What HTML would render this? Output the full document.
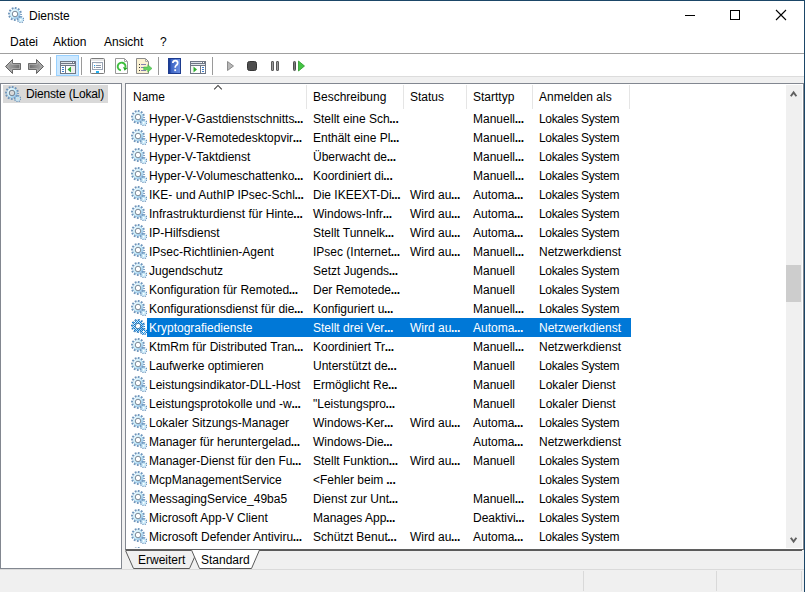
<!DOCTYPE html>
<html><head><meta charset="utf-8"><style>
*{box-sizing:border-box}
html,body{margin:0;padding:0;width:805px;height:592px;overflow:hidden;background:#f0f0f0;font-family:"Liberation Sans",sans-serif;font-size:12px;color:#000}
.a{position:absolute}
.t{position:absolute;white-space:nowrap;line-height:14px}
.sep{position:absolute;width:1px;top:57px;height:18px;background:#9a9a9a}
.hs{position:absolute;top:85px;width:1px;height:24px;background:#e5e5e5}
.w{color:#fff}
i{font-style:normal;font-weight:bold;letter-spacing:-0.3px;margin-left:-0.4px}
</style></head><body>
<svg width="0" height="0" style="position:absolute">
 <defs>
  <linearGradient id="ring" x1="0" y1="0" x2="1" y2="1">
   <stop offset="0" stop-color="#eefaff"/>
   <stop offset="0.55" stop-color="#c4ecfb"/>
   <stop offset="1" stop-color="#8fbde6"/>
  </linearGradient>
  <g id="gear">
   <circle cx="7" cy="7" r="6.0" fill="none" stroke="#6d94ba" stroke-width="1.9" stroke-dasharray="1.75 1.392" stroke-dashoffset="0.875"/>
   <circle cx="7" cy="7" r="4.95" fill="none" stroke="#7aa4ca" stroke-width="0.8"/>
   <circle cx="7" cy="7" r="3.95" fill="none" stroke="url(#ring)" stroke-width="1.9"/>
   <circle cx="7" cy="7" r="2.75" fill="none" stroke="#5a6b7c" stroke-width="0.8"/>
   <circle cx="12.7" cy="12.7" r="2.9" fill="none" stroke="#6e97bf" stroke-width="1.6" stroke-dasharray="1.2 1.077"/>
   <circle cx="12.7" cy="12.7" r="1.6" fill="none" stroke="#c0e6f8" stroke-width="1.3"/>
  </g>
  <pattern id="chk" width="2" height="2" patternUnits="userSpaceOnUse">
   <rect x="0" y="0" width="1" height="1" fill="#0078d7"/>
   <rect x="1" y="1" width="1" height="1" fill="#0078d7"/>
  </pattern>
  <mask id="gmask" style="mask-type:alpha" maskUnits="userSpaceOnUse" x="0" y="0" width="16" height="16">
   <use href="#gear"/>
  </mask>
  <linearGradient id="arrowg" x1="0" y1="0" x2="0" y2="1">
   <stop offset="0" stop-color="#b9b9b9"/>
   <stop offset="0.5" stop-color="#8a8a8a"/>
   <stop offset="1" stop-color="#a0a0a0"/>
  </linearGradient>
  <linearGradient id="arrowh" x1="0" y1="0" x2="1" y2="0">
   <stop offset="0" stop-color="#a8a8a8"/>
   <stop offset="1" stop-color="#6e6e6e"/>
  </linearGradient>
  <linearGradient id="arrowh2" x1="0" y1="0" x2="1" y2="0">
   <stop offset="0" stop-color="#6e6e6e"/>
   <stop offset="1" stop-color="#a8a8a8"/>
  </linearGradient>
  <linearGradient id="helpg" x1="0" y1="0" x2="1" y2="0">
   <stop offset="0" stop-color="#2d55b8"/>
   <stop offset="1" stop-color="#6f93e6"/>
  </linearGradient>
 </defs>
</svg>
<div class="a" style="left:0;top:0;width:805px;height:53px;background:#fff"></div>
<div class="a" style="left:0;top:0;width:805px;height:1px;background:#1b4667"></div>
<svg class="a" style="left:8px;top:7px" width="16" height="16" viewBox="0 0 16 16"><use href="#gear"/></svg>
<div class="t" style="left:29px;top:9px">Dienste</div>
<svg class="a" style="left:680px;top:5px" width="120" height="20">
 <rect x="5" y="10" width="10" height="1" fill="#000"/>
 <rect x="50.5" y="5.5" width="9" height="9" fill="none" stroke="#000" stroke-width="1"/>
 <path d="M96 5 L106 15 M106 5 L96 15" stroke="#000" stroke-width="1.1"/>
</svg>
<div class="t" style="left:10px;top:35px">Datei</div>
<div class="t" style="left:53px;top:35px">Aktion</div>
<div class="t" style="left:104px;top:35px">Ansicht</div>
<div class="t" style="left:160px;top:35px">?</div>
<div class="a" style="left:0;top:53px;width:804px;height:1px;background:#a0a0a0"></div>
<div class="a" style="left:0;top:54px;width:804px;height:22px;background:#fff"></div>
<div class="a" style="left:0;top:76px;width:804px;height:1px;background:#dcdcdc"></div>
<div class="sep" style="left:50px"></div>
<div class="sep" style="left:81px"></div>
<div class="sep" style="left:158px"></div>
<div class="sep" style="left:212px"></div>
<svg class="a" style="left:0;top:54px" width="320" height="22">
 <path d="M5.5 12.5 L12.5 5.5 L12.5 9.5 L20.5 9.5 L20.5 15.5 L12.5 15.5 L12.5 19.5 Z" fill="url(#arrowg)" stroke="#626262" stroke-width="1" stroke-linejoin="round"/>
 <path d="M7 12.5 L11.7 7.6 L11.7 10.3 L19.7 10.3 L19.7 14.7 L11.7 14.7 L11.7 17.4 Z" fill="url(#arrowh)" stroke="#c4c4c4" stroke-width="0.6" stroke-linejoin="round"/>
 <path d="M43.5 12.5 L36.5 5.5 L36.5 9.5 L28.5 9.5 L28.5 15.5 L36.5 15.5 L36.5 19.5 Z" fill="url(#arrowg)" stroke="#626262" stroke-width="1" stroke-linejoin="round"/>
 <path d="M42 12.5 L37.3 7.6 L37.3 10.3 L29.3 10.3 L29.3 14.7 L37.3 14.7 L37.3 17.4 Z" fill="url(#arrowh2)" stroke="#c4c4c4" stroke-width="0.6" stroke-linejoin="round"/>
 <rect x="56.5" y="1.5" width="22" height="20" fill="#cce8ff" stroke="#99d1ff"/>
 <g transform="translate(60,7)">
  <rect x="0.5" y="0.5" width="15" height="12" fill="#fff" stroke="#6f7785"/>
  <rect x="1" y="1" width="10" height="1" fill="#dfe3ea"/>
  <rect x="12" y="1" width="1" height="1" fill="#6f7785"/><rect x="14" y="1" width="1" height="1" fill="#6f7785"/>
  <rect x="1" y="2" width="14" height="1" fill="#6f7785"/>
  <rect x="1" y="3" width="14" height="1" fill="#e4e7ec"/>
  <rect x="1" y="4" width="14" height="1" fill="#6f7785"/>
  <rect x="5" y="5" width="1" height="7" fill="#6f7785"/>
  <rect x="11" y="5" width="4" height="7" fill="#eeeeee"/>
  <rect x="2" y="6" width="2" height="1" fill="#3f7fd0"/>
  <rect x="2" y="8" width="2" height="1" fill="#3f7fd0"/>
  <rect x="2" y="10" width="2" height="1" fill="#3f7fd0"/>
  <path d="M7.5 8.5 L11 5.5 L11 11.5 Z" fill="#2fae2f"/>
 </g>
 <g transform="translate(90,4)">
  <rect x="0.5" y="0.5" width="14" height="15" rx="1" fill="#fff" stroke="#7a7a7a"/>
  <rect x="1" y="1" width="13" height="2" fill="#e8e8e8"/>
  <rect x="2.5" y="4.5" width="10" height="7" fill="#fff" stroke="#9aa4b4"/>
  <rect x="6" y="4" width="5" height="1.2" fill="#9aa4b4"/>
  <rect x="4" y="7" width="1.2" height="1.2" fill="#1ea0f0"/>
  <rect x="6" y="7" width="5" height="1" fill="#8a96a8"/>
  <rect x="4" y="9" width="1.2" height="1" fill="#888"/>
  <rect x="6" y="9" width="5" height="1" fill="#8a96a8"/>
  <rect x="6" y="13" width="3" height="2" fill="#23b0f0"/>
 </g>
 <g transform="translate(115,4)">
  <path d="M0.5 0.5 L9.5 0.5 L12.5 3.5 L12.5 15.5 L0.5 15.5 Z" fill="#fff" stroke="#999"/>
  <path d="M9.5 0.5 L9.5 3.5 L12.5 3.5" fill="none" stroke="#aaa"/>
  <path d="M5.92 12.34 A3.9 3.9 0 1 1 10.37 9.51" fill="none" stroke="#3dbe3d" stroke-width="1.9"/>
  <path d="M8.1 8.9 L12.6 10.1 L9.6 12.8 Z" fill="#22a822"/>
 </g>
 <g transform="translate(136,4)">
  <path d="M0.5 0.5 L9.5 0.5 L12.5 3.5 L12.5 15.5 L0.5 15.5 Z" fill="#fbf2d3" stroke="#8a8a8a"/>
  <path d="M9.5 0.5 L9.5 3.5 L12.5 3.5" fill="none" stroke="#aaa"/>
  <rect x="3" y="6" width="1" height="1" fill="#333"/>
  <rect x="3" y="9" width="1" height="1" fill="#333"/>
  <rect x="3" y="12" width="1" height="1" fill="#333"/>
  <rect x="5" y="6" width="5" height="1" fill="#8480b0"/>
  <rect x="5" y="9" width="5" height="1" fill="#8480b0"/>
  <rect x="5" y="12" width="5" height="1" fill="#8480b0"/>
  <path d="M7.7 9 L11.8 9 L11.8 6.7 L16 10.4 L11.8 14.1 L11.8 11.8 L7.7 11.8 Z" fill="#62d262" stroke="#3aaa3a" stroke-width="0.5"/>
 </g>
 <g transform="translate(168,4)">
  <rect x="0" y="0" width="13" height="16" fill="url(#helpg)"/>
  <rect x="0" y="0" width="2.5" height="16" fill="#1c3f9c"/>
  <rect x="0.5" y="0.5" width="12" height="15" fill="none" stroke="#1d3b8e"/>
  <path d="M4.8 5 Q5 2.6 7.3 2.6 Q9.7 2.6 9.7 5 Q9.7 6.6 8 7.6 Q7.2 8.2 7.2 9.8" fill="none" stroke="#fff" stroke-width="1.7"/>
  <rect x="6.3" y="11.3" width="1.8" height="1.8" fill="#fff"/>
 </g>
 <g transform="translate(190,7)">
  <rect x="0.5" y="0.5" width="15" height="12" fill="#fff" stroke="#6f7785"/>
  <rect x="1" y="1" width="10" height="1" fill="#dfe3ea"/>
  <rect x="12" y="1" width="1" height="1" fill="#6f7785"/><rect x="14" y="1" width="1" height="1" fill="#6f7785"/>
  <rect x="1" y="2" width="14" height="1" fill="#6f7785"/>
  <rect x="1" y="3" width="14" height="1" fill="#e4e7ec"/>
  <rect x="1" y="4" width="14" height="1" fill="#6f7785"/>
  <rect x="10" y="5" width="1" height="7" fill="#6f7785"/>
  <rect x="1" y="5" width="2" height="7" fill="#f4f4f4"/>
  <rect x="12" y="6" width="2" height="1" fill="#3f7fd0"/>
  <rect x="12" y="8" width="2" height="1" fill="#3f7fd0"/>
  <rect x="12" y="10" width="2" height="1" fill="#3f7fd0"/>
  <path d="M3.5 5.5 L7 8.5 L3.5 11.5 Z" fill="#2fae2f"/>
 </g>
 <path d="M227.5 7.5 L233.5 12 L227.5 16.5 Z" fill="#b8b8b8" stroke="#8c8c8c"/>
 <rect x="247.5" y="7.5" width="9" height="9" rx="2" fill="#4e4e4e" stroke="#363636"/>
 <rect x="271.5" y="7.5" width="2" height="9" rx="0.4" fill="#9a9a9a" stroke="#5a5a5a"/>
 <rect x="276.5" y="7.5" width="2" height="9" rx="0.4" fill="#9a9a9a" stroke="#5a5a5a"/>
 <rect x="293.5" y="7.5" width="2" height="9" rx="0.8" fill="#7a7a7a" stroke="#4e4e4e"/>
 <path d="M298.5 7 L304.5 12 L298.5 17 Z" fill="#44c444" stroke="#2a9a2a" stroke-width="0.8"/>
</svg>
<div class="a" style="left:0;top:83px;width:122px;height:486px;background:#fff;border:1px solid #828790"></div>
<div class="a" style="left:3px;top:85px;width:105px;height:18px;background:#d9d9d9"></div>
<svg class="a" style="left:5px;top:86px" width="16" height="16" viewBox="0 0 16 16"><use href="#gear"/></svg>
<div class="t" style="left:26px;top:87px;letter-spacing:-0.17px">Dienste (Lokal)</div>
<div class="a" style="left:125px;top:83px;width:679px;height:467px;background:#fff;border:1px solid #828790;border-bottom-color:#5f5f5f"></div>
<div class="t" style="left:133px;top:90px">Name</div>
<svg class="a" style="left:213px;top:84px" width="10" height="7"><path d="M1.2 5.3 L5 1.5 L8.8 5.3" stroke="#3c3c3c" stroke-width="1.05" fill="none"/></svg>
<div class="hs" style="left:306px"></div>
<div class="hs" style="left:403px"></div>
<div class="hs" style="left:466px"></div>
<div class="hs" style="left:532px"></div>
<div class="hs" style="left:629px"></div>
<div class="t" style="left:313px;top:90px">Beschreibung</div>
<div class="t" style="left:410px;top:90px">Status</div>
<div class="t" style="left:473px;top:90px">Starttyp</div>
<div class="t" style="left:539px;top:90px">Anmelden als</div>
<div class="a" style="left:126px;top:109px;width:659px;height:439px;overflow:hidden">
<svg class="a" style="left:5px;top:1px" width="16" height="16" viewBox="0 0 16 16"><use href="#gear"/></svg>
<div class="t" style="left:23px;top:3px">Hyper-V-Gastdienstschnitts<i>...</i></div>
<div class="t" style="left:187px;top:3px">Stellt eine Sch<i>...</i></div>
<div class="t" style="left:347px;top:3px">Manuell<i>...</i></div>
<div class="t" style="left:413px;top:3px"><span style="letter-spacing:-0.33px">Lokales System</span></div>
<svg class="a" style="left:5px;top:20px" width="16" height="16" viewBox="0 0 16 16"><use href="#gear"/></svg>
<div class="t" style="left:23px;top:22px">Hyper-V-Remotedesktopvir<i>...</i></div>
<div class="t" style="left:187px;top:22px">Enthält eine Pl<i>...</i></div>
<div class="t" style="left:347px;top:22px">Manuell<i>...</i></div>
<div class="t" style="left:413px;top:22px"><span style="letter-spacing:-0.33px">Lokales System</span></div>
<svg class="a" style="left:5px;top:39px" width="16" height="16" viewBox="0 0 16 16"><use href="#gear"/></svg>
<div class="t" style="left:23px;top:41px">Hyper-V-Taktdienst</div>
<div class="t" style="left:187px;top:41px">Überwacht de<i>...</i></div>
<div class="t" style="left:347px;top:41px">Manuell<i>...</i></div>
<div class="t" style="left:413px;top:41px"><span style="letter-spacing:-0.33px">Lokales System</span></div>
<svg class="a" style="left:5px;top:58px" width="16" height="16" viewBox="0 0 16 16"><use href="#gear"/></svg>
<div class="t" style="left:23px;top:60px">Hyper-V-Volumeschattenko<i>...</i></div>
<div class="t" style="left:187px;top:60px">Koordiniert di<i>...</i></div>
<div class="t" style="left:347px;top:60px">Manuell<i>...</i></div>
<div class="t" style="left:413px;top:60px"><span style="letter-spacing:-0.33px">Lokales System</span></div>
<svg class="a" style="left:5px;top:77px" width="16" height="16" viewBox="0 0 16 16"><use href="#gear"/></svg>
<div class="t" style="left:23px;top:79px">IKE- und AuthIP IPsec-Schl<i>...</i></div>
<div class="t" style="left:187px;top:79px">Die IKEEXT-Di<i>...</i></div>
<div class="t" style="left:284px;top:79px">Wird au<i>...</i></div>
<div class="t" style="left:347px;top:79px">Automa<i>...</i></div>
<div class="t" style="left:413px;top:79px"><span style="letter-spacing:-0.33px">Lokales System</span></div>
<svg class="a" style="left:5px;top:96px" width="16" height="16" viewBox="0 0 16 16"><use href="#gear"/></svg>
<div class="t" style="left:23px;top:98px">Infrastrukturdienst für Hinte<i>...</i></div>
<div class="t" style="left:187px;top:98px">Windows-Infr<i>...</i></div>
<div class="t" style="left:284px;top:98px">Wird au<i>...</i></div>
<div class="t" style="left:347px;top:98px">Automa<i>...</i></div>
<div class="t" style="left:413px;top:98px"><span style="letter-spacing:-0.33px">Lokales System</span></div>
<svg class="a" style="left:5px;top:115px" width="16" height="16" viewBox="0 0 16 16"><use href="#gear"/></svg>
<div class="t" style="left:23px;top:117px">IP-Hilfsdienst</div>
<div class="t" style="left:187px;top:117px">Stellt Tunnelk<i>...</i></div>
<div class="t" style="left:284px;top:117px">Wird au<i>...</i></div>
<div class="t" style="left:347px;top:117px">Automa<i>...</i></div>
<div class="t" style="left:413px;top:117px"><span style="letter-spacing:-0.33px">Lokales System</span></div>
<svg class="a" style="left:5px;top:134px" width="16" height="16" viewBox="0 0 16 16"><use href="#gear"/></svg>
<div class="t" style="left:23px;top:136px">IPsec-Richtlinien-Agent</div>
<div class="t" style="left:187px;top:136px">IPsec (Internet<i>...</i></div>
<div class="t" style="left:284px;top:136px">Wird au<i>...</i></div>
<div class="t" style="left:347px;top:136px">Manuell<i>...</i></div>
<div class="t" style="left:413px;top:136px">Netzwerkdienst</div>
<svg class="a" style="left:5px;top:153px" width="16" height="16" viewBox="0 0 16 16"><use href="#gear"/></svg>
<div class="t" style="left:23px;top:155px">Jugendschutz</div>
<div class="t" style="left:187px;top:155px">Setzt Jugends<i>...</i></div>
<div class="t" style="left:347px;top:155px">Manuell</div>
<div class="t" style="left:413px;top:155px"><span style="letter-spacing:-0.33px">Lokales System</span></div>
<svg class="a" style="left:5px;top:172px" width="16" height="16" viewBox="0 0 16 16"><use href="#gear"/></svg>
<div class="t" style="left:23px;top:174px">Konfiguration für Remoted<i>...</i></div>
<div class="t" style="left:187px;top:174px">Der Remotede<i>...</i></div>
<div class="t" style="left:347px;top:174px">Manuell</div>
<div class="t" style="left:413px;top:174px"><span style="letter-spacing:-0.33px">Lokales System</span></div>
<svg class="a" style="left:5px;top:191px" width="16" height="16" viewBox="0 0 16 16"><use href="#gear"/></svg>
<div class="t" style="left:23px;top:193px">Konfigurationsdienst für die<i>...</i></div>
<div class="t" style="left:187px;top:193px">Konfiguriert u<i>...</i></div>
<div class="t" style="left:347px;top:193px">Manuell<i>...</i></div>
<div class="t" style="left:413px;top:193px"><span style="letter-spacing:-0.33px">Lokales System</span></div>
<div class="a" style="left:21px;top:209px;width:484px;height:19px;background:#0078d7"></div>
<svg class="a" style="left:5px;top:210px" width="16" height="16" viewBox="0 0 16 16"><use href="#gear"/><rect width="16" height="16" fill="url(#chk)" mask="url(#gmask)"/></svg>
<div class="t w" style="left:23px;top:212px">Kryptografiedienste</div>
<div class="t w" style="left:187px;top:212px">Stellt drei Ver<i>...</i></div>
<div class="t w" style="left:284px;top:212px">Wird au<i>...</i></div>
<div class="t w" style="left:347px;top:212px">Automa<i>...</i></div>
<div class="t w" style="left:413px;top:212px">Netzwerkdienst</div>
<svg class="a" style="left:5px;top:229px" width="16" height="16" viewBox="0 0 16 16"><use href="#gear"/></svg>
<div class="t" style="left:23px;top:231px">KtmRm für Distributed Tran<i>...</i></div>
<div class="t" style="left:187px;top:231px">Koordiniert Tr<i>...</i></div>
<div class="t" style="left:347px;top:231px">Manuell<i>...</i></div>
<div class="t" style="left:413px;top:231px">Netzwerkdienst</div>
<svg class="a" style="left:5px;top:248px" width="16" height="16" viewBox="0 0 16 16"><use href="#gear"/></svg>
<div class="t" style="left:23px;top:250px">Laufwerke optimieren</div>
<div class="t" style="left:187px;top:250px">Unterstützt de<i>...</i></div>
<div class="t" style="left:347px;top:250px">Manuell</div>
<div class="t" style="left:413px;top:250px"><span style="letter-spacing:-0.33px">Lokales System</span></div>
<svg class="a" style="left:5px;top:267px" width="16" height="16" viewBox="0 0 16 16"><use href="#gear"/></svg>
<div class="t" style="left:23px;top:269px">Leistungsindikator-DLL-Host</div>
<div class="t" style="left:187px;top:269px">Ermöglicht Re<i>...</i></div>
<div class="t" style="left:347px;top:269px">Manuell</div>
<div class="t" style="left:413px;top:269px">Lokaler Dienst</div>
<svg class="a" style="left:5px;top:286px" width="16" height="16" viewBox="0 0 16 16"><use href="#gear"/></svg>
<div class="t" style="left:23px;top:288px">Leistungsprotokolle und -w<i>...</i></div>
<div class="t" style="left:187px;top:288px">"Leistungspro<i>...</i></div>
<div class="t" style="left:347px;top:288px">Manuell</div>
<div class="t" style="left:413px;top:288px">Lokaler Dienst</div>
<svg class="a" style="left:5px;top:305px" width="16" height="16" viewBox="0 0 16 16"><use href="#gear"/></svg>
<div class="t" style="left:23px;top:307px">Lokaler Sitzungs-Manager</div>
<div class="t" style="left:187px;top:307px">Windows-Ker<i>...</i></div>
<div class="t" style="left:284px;top:307px">Wird au<i>...</i></div>
<div class="t" style="left:347px;top:307px">Automa<i>...</i></div>
<div class="t" style="left:413px;top:307px"><span style="letter-spacing:-0.33px">Lokales System</span></div>
<svg class="a" style="left:5px;top:324px" width="16" height="16" viewBox="0 0 16 16"><use href="#gear"/></svg>
<div class="t" style="left:23px;top:326px">Manager für heruntergelad<i>...</i></div>
<div class="t" style="left:187px;top:326px">Windows-Die<i>...</i></div>
<div class="t" style="left:347px;top:326px">Automa<i>...</i></div>
<div class="t" style="left:413px;top:326px">Netzwerkdienst</div>
<svg class="a" style="left:5px;top:343px" width="16" height="16" viewBox="0 0 16 16"><use href="#gear"/></svg>
<div class="t" style="left:23px;top:345px">Manager-Dienst für den Fu<i>...</i></div>
<div class="t" style="left:187px;top:345px">Stellt Funktion<i>...</i></div>
<div class="t" style="left:284px;top:345px">Wird au<i>...</i></div>
<div class="t" style="left:347px;top:345px">Manuell</div>
<div class="t" style="left:413px;top:345px"><span style="letter-spacing:-0.33px">Lokales System</span></div>
<svg class="a" style="left:5px;top:362px" width="16" height="16" viewBox="0 0 16 16"><use href="#gear"/></svg>
<div class="t" style="left:23px;top:364px">McpManagementService</div>
<div class="t" style="left:187px;top:364px">&lt;Fehler beim <i>...</i></div>
<div class="t" style="left:413px;top:364px"><span style="letter-spacing:-0.33px">Lokales System</span></div>
<svg class="a" style="left:5px;top:381px" width="16" height="16" viewBox="0 0 16 16"><use href="#gear"/></svg>
<div class="t" style="left:23px;top:383px">MessagingService_49ba5</div>
<div class="t" style="left:187px;top:383px">Dienst zur Unt<i>...</i></div>
<div class="t" style="left:347px;top:383px">Manuell<i>...</i></div>
<div class="t" style="left:413px;top:383px"><span style="letter-spacing:-0.33px">Lokales System</span></div>
<svg class="a" style="left:5px;top:400px" width="16" height="16" viewBox="0 0 16 16"><use href="#gear"/></svg>
<div class="t" style="left:23px;top:402px">Microsoft App-V Client</div>
<div class="t" style="left:187px;top:402px">Manages App<i>...</i></div>
<div class="t" style="left:347px;top:402px">Deaktivi<i>...</i></div>
<div class="t" style="left:413px;top:402px"><span style="letter-spacing:-0.33px">Lokales System</span></div>
<svg class="a" style="left:5px;top:419px" width="16" height="16" viewBox="0 0 16 16"><use href="#gear"/></svg>
<div class="t" style="left:23px;top:421px">Microsoft Defender Antiviru<i>...</i></div>
<div class="t" style="left:187px;top:421px">Schützt Benut<i>...</i></div>
<div class="t" style="left:284px;top:421px">Wird au<i>...</i></div>
<div class="t" style="left:347px;top:421px">Automa<i>...</i></div>
<div class="t" style="left:413px;top:421px"><span style="letter-spacing:-0.33px">Lokales System</span></div>
<svg class="a" style="left:5px;top:438px" width="16" height="16" viewBox="0 0 16 16"><use href="#gear"/></svg>
</div>
<div class="a" style="left:786px;top:85px;width:16px;height:463px;background:#f0f0f0"></div>
<div class="a" style="left:786px;top:265px;width:15px;height:37px;background:#cdcdcd"></div>
<svg class="a" style="left:786px;top:85px" width="16" height="16"><path d="M4.8 11.3 L7.6 7.4 L10.4 11.3" stroke="#606060" stroke-width="1.9" fill="none"/></svg>
<svg class="a" style="left:786px;top:532px" width="16" height="16"><path d="M4.8 5.7 L7.6 9.6 L10.4 5.7" stroke="#606060" stroke-width="1.9" fill="none"/></svg>
<svg class="a" style="left:120px;top:549px" width="684" height="20">
 <path d="M5.5 1.5 L13.5 19.5 L69.5 19.5 L77.5 1.5" fill="#f0f0f0" stroke="#5a5a5a" stroke-width="1"/>
 <rect x="6" y="1" width="65" height="1" fill="#5a5a5a"/>
 <rect x="139" y="1" width="543" height="1" fill="#5a5a5a"/>
 <path d="M71.5 1 L79.5 19.5 L131.5 19.5 L139.5 1" fill="#fff" stroke="#5a5a5a" stroke-width="1"/>
</svg>
<div class="t" style="left:138px;top:553px">Erweitert</div>
<div class="t" style="left:201px;top:553px">Standard</div>
<div class="a" style="left:804px;top:0;width:1px;height:592px;background:#1b4667"></div>
<div class="a" style="left:0;top:569px;width:804px;height:1px;background:#dadada"></div>
<div class="a" style="left:583px;top:571px;width:1px;height:20px;background:#d9d9d9"></div>
<div class="a" style="left:716px;top:571px;width:1px;height:20px;background:#d9d9d9"></div>
<div class="a" style="left:801px;top:571px;width:1px;height:20px;background:#d9d9d9"></div>
</body></html>
